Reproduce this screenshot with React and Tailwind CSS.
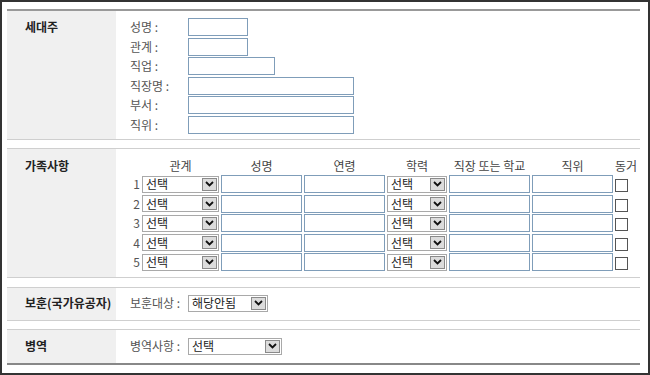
import React from "react";

const FONT = { fontFamily: '"Noto Sans CJK KR", "Noto Sans", sans-serif' };

// XP-style dropdown look
const Select = ({ className, value }) => (
  <div className={`flex items-center justify-between h-[17px] border border-[#a9a9a9] bg-white pl-[3px] pr-[1px] ${className}`}>
    <span className="text-[12px] leading-none text-[#222]">{value}</span>
    <div className="flex items-center justify-center w-[15px] h-[13px] bg-[#dcdcdc] border border-[#8a8a8a]">
      <svg width="9" height="6" viewBox="0 0 9 6">
        <path d="M1 1 L4.5 4.5 L8 1" stroke="#111" strokeWidth="1.8" fill="none" />
      </svg>
    </div>
  </div>
);

const Input = ({ className }) => (
  <div className={`h-[18px] border border-[#7f9db9] bg-white ${className}`} />
);

const Section = ({ title, children, first, last, labelPad }) => (
  <div
    className={`flex ${first ? "border-t-2 border-t-[#999]" : "border-t border-t-[#cfcfcf]"} ${
      last ? "border-b-2 border-b-[#888]" : "border-b border-b-[#cfcfcf]"
    }`}
  >
    <div className={`w-[109px] shrink-0 bg-[#f0f0f0] pl-[18px] leading-[16px] ${labelPad}`}>
      <span className="block text-[12px] leading-[16px] font-bold text-[#222]">{title}</span>
    </div>
    <div className="flex-1 pl-[14px]">{children}</div>
  </div>
);

const owner = [
  { label: "성명 :", w: "w-[60px]" },
  { label: "관계 :", w: "w-[60px]" },
  { label: "직업 :", w: "w-[87px]" },
  { label: "직장명 :", w: "w-[166px]" },
  { label: "부서 :", w: "w-[166px]" },
  { label: "직위 :", w: "w-[166px]" },
];

const headers = ["", "관계", "성명", "연령", "학력", "직장 또는 학교", "직위", "동거"];

export default function App() {
  return (
    <div style={FONT} className="w-[650px] h-[375px] border-2 border-[#333] bg-white pt-[7px] pl-[5px] pr-[8px]">
      {/* 세대주 */}
      <Section title="세대주" first labelPad="pt-[8px]">
        <div className="flex flex-col gap-[1.6px] pt-[7px] pb-[5px]">
          {owner.map((row) => (
            <div key={row.label} className="flex items-center h-[18px]">
              <span className="w-[58px] text-[12px] leading-[16px] text-[#555]">{row.label}</span>
              <Input className={row.w} />
            </div>
          ))}
        </div>
      </Section>

      <div className="h-[8px]" />

      {/* 가족사항 */}
      <Section title="가족사항" labelPad="pt-[9px]">
        <div className="grid grid-cols-[10px_77px_81px_81px_60px_81px_81px_16px] gap-x-[2px] gap-y-[1.5px] pt-[8px] pb-[6px] items-center">
          {headers.map((h, i) => (
            <div key={i} className={`h-[17px] text-[12px] leading-[17px] text-[#444] whitespace-nowrap ${i === 7 ? "text-left" : "text-center"}`}>
              {h}
            </div>
          ))}
          {[1, 2, 3, 4, 5].map((n) => (
            <React.Fragment key={n}>
              <span className="text-[12px] text-[#555] text-right leading-[18px]">{n}</span>
              <Select className="w-[77px]" value="선택" />
              <Input className="w-[81px]" />
              <Input className="w-[81px]" />
              <Select className="w-[60px]" value="선택" />
              <Input className="w-[81px]" />
              <Input className="w-[81px]" />
              <div className="w-[13px] h-[13px] border border-[#555] bg-white mt-[3px]" />
            </React.Fragment>
          ))}
        </div>
      </Section>

      <div className="h-[9px]" />

      {/* 보훈 */}
      <Section title="보훈(국가유공자)" labelPad="pt-[7px]">
        <div className="flex items-center h-[32px] pb-[2px]">
          <span className="w-[58px] text-[12px] leading-[16px] text-[#555]">보훈대상 :</span>
          <Select className="w-[80px]" value="해당안됨" />
        </div>
      </Section>

      <div className="h-[8px]" />

      {/* 병역 */}
      <Section title="병역" last labelPad="pt-[8px]">
        <div className="flex items-center h-[33px] pb-[1px]">
          <span className="w-[58px] text-[12px] leading-[16px] text-[#555]">병역사항 :</span>
          <Select className="w-[94px]" value="선택" />
        </div>
      </Section>
    </div>
  );
}
